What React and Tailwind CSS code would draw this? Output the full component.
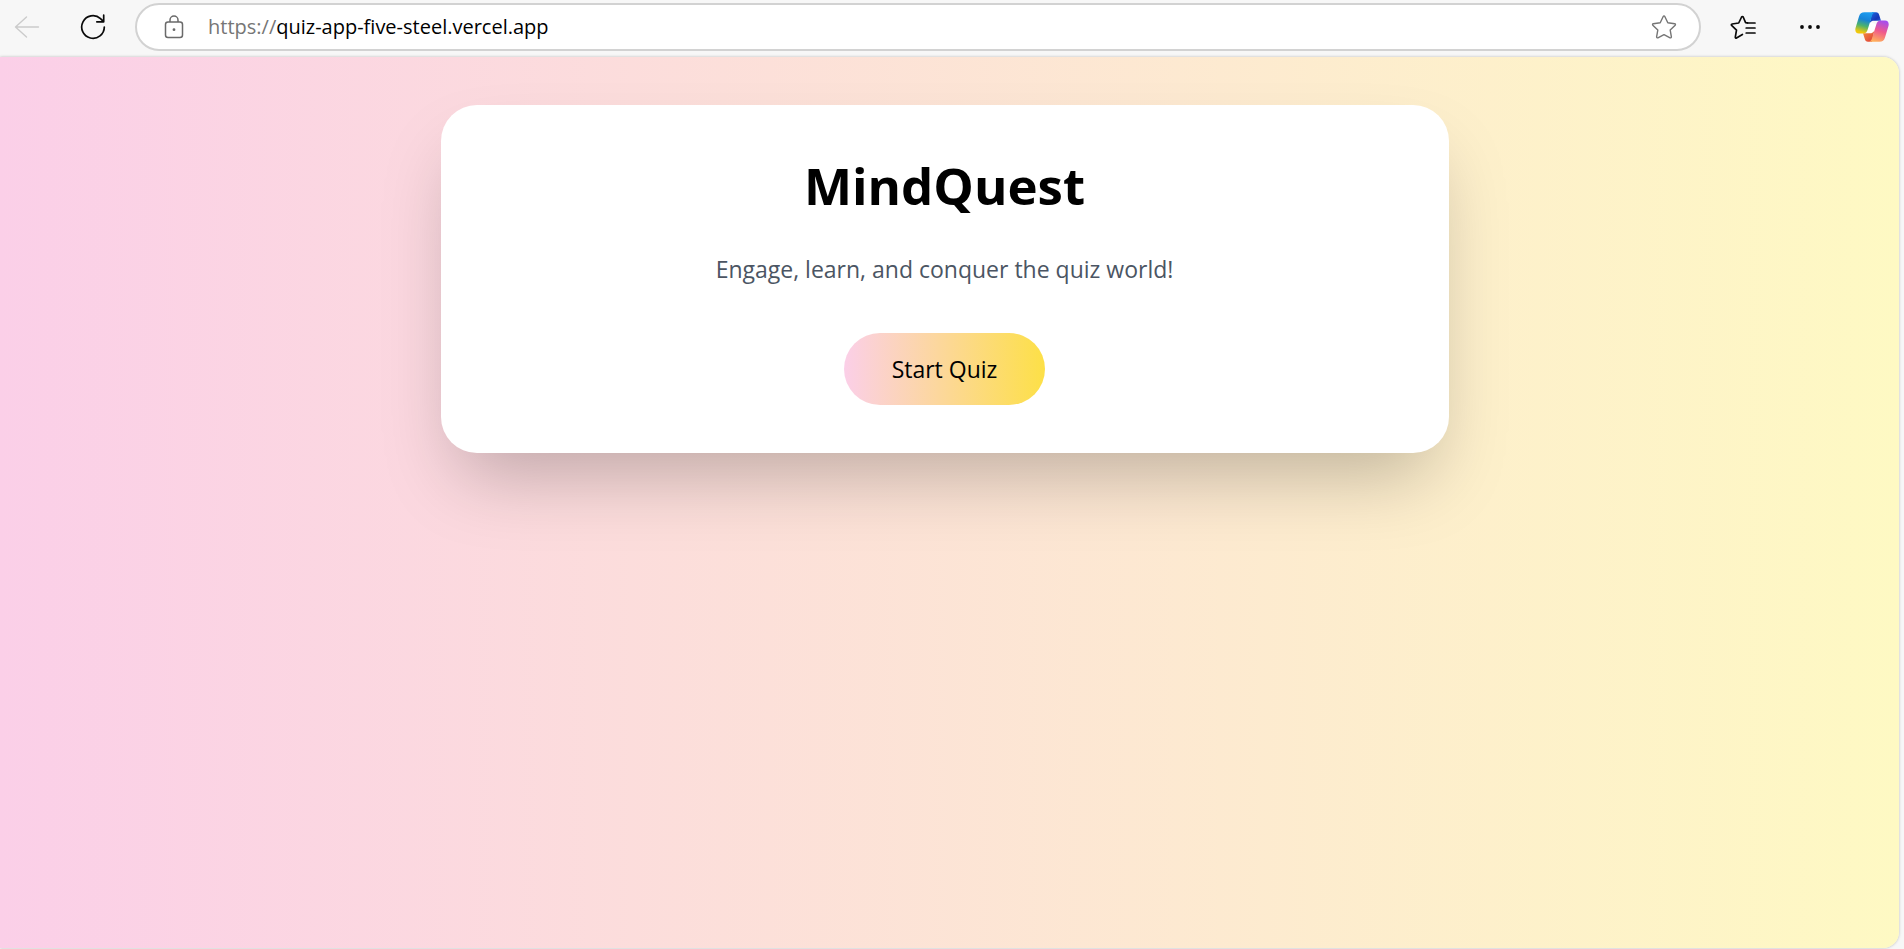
function BackIcon() {
  return (
    <svg width="26" height="24" viewBox="0 0 26 24" fill="none" stroke="#cbcbcb" strokeWidth="1.4" strokeLinecap="round" strokeLinejoin="round" aria-hidden="true">
      <path d="M24.5 12H1.5M12.5 2 1.5 12 12.5 22" />
    </svg>
  );
}

function ReloadIcon() {
  return (
    <svg width="26" height="26" viewBox="0 0 26 26" fill="none" stroke="#0a0a0a" strokeWidth="1.7" strokeLinecap="round" strokeLinejoin="round" aria-hidden="true">
      <path d="M24.3 13A11.3 11.3 0 1 1 20.5 4.6L23.5 7.6M23.7 1.2V7.8H16.8" />
    </svg>
  );
}

function LockIcon() {
  return (
    <svg width="20" height="24" viewBox="0 0 20 24" fill="none" stroke="#6a6a6a" strokeWidth="1.5" aria-hidden="true">
      <rect x="1.5" y="7" width="17" height="15.5" rx="2.5" />
      <path d="M6 7V5a4 4 0 0 1 8 0v2" />
      <circle cx="10" cy="14.7" r="1.4" fill="#6a6a6a" stroke="none" />
    </svg>
  );
}

function StarIcon() {
  return (
    <svg width="26" height="26" viewBox="0 0 26 26" fill="none" stroke="#757575" strokeWidth="1.4" strokeLinejoin="round" aria-hidden="true">
      <path d="M12.2 2.5a.9.9 0 0 1 1.6 0l3 6.2 6.9 1a.9.9 0 0 1 .5 1.5l-5 4.9 1.2 6.8a.9.9 0 0 1-1.3.9L13 20.6l-6.1 3.2a.9.9 0 0 1-1.3-.9l1.2-6.8-5-4.9a.9.9 0 0 1 .5-1.5l6.9-1z" />
    </svg>
  );
}

function FavoritesIcon() {
  return (
    <svg width="26" height="26" viewBox="0 0 26 26" fill="none" stroke="#0a0a0a" strokeWidth="1.7" strokeLinecap="round" strokeLinejoin="round" aria-hidden="true">
      <path d="M17.5 8.8 15.6 8.6 13.2 3a.9.9 0 0 0-1.6 0L8.7 9 2.1 10a.8.8 0 0 0-.5 1.4l4.9 4.7-1.2 7.1a.8.8 0 0 0 1.2.8l5.9-3.5" />
      <path d="M17.5 9H25M16.2 14H25M16.2 19H25" />
    </svg>
  );
}

function MoreIcon() {
  return (
    <svg width="20" height="4" viewBox="0 0 20 4" fill="#0a0a0a" aria-hidden="true">
      <circle cx="2" cy="2" r="1.9" />
      <circle cx="10" cy="2" r="1.9" />
      <circle cx="18" cy="2" r="1.9" />
    </svg>
  );
}

function CopilotIcon() {
  return (
    <svg width="34" height="30" viewBox="0 0 34 30" aria-hidden="true">
      <defs>
        <linearGradient id="cp-left" x1="0.6" y1="0" x2="0.35" y2="1">
          <stop offset="0" stopColor="#1c9df0" />
          <stop offset="0.35" stopColor="#1683d8" />
          <stop offset="0.65" stopColor="#4db36b" />
          <stop offset="0.95" stopColor="#f0c80c" />
        </linearGradient>
        <linearGradient id="cp-right" x1="0.7" y1="0" x2="0.4" y2="1">
          <stop offset="0" stopColor="#a44df0" />
          <stop offset="0.5" stopColor="#f0598c" />
          <stop offset="1" stopColor="#ffae5c" />
        </linearGradient>
        <linearGradient id="cp-top" x1="0" y1="0" x2="1" y2="1">
          <stop offset="0" stopColor="#1b6fe0" />
          <stop offset="0.6" stopColor="#1736b8" />
          <stop offset="1" stopColor="#2a6fe0" />
        </linearGradient>
        <linearGradient id="cp-bottom" x1="0" y1="0" x2="1" y2="1">
          <stop offset="0" stopColor="#f6913a" />
          <stop offset="1" stopColor="#dc3a3c" />
        </linearGradient>
      </defs>
      <path d="M12 8 21 12.5 24 18 13 22 10 18z" fill="#ffffff" />
      <path d="M17 .3h4c1.8 0 2.7 1 3.2 2.7L26 8.7H19c-1.8 0-3 .6-4.3 2.5z" fill="url(#cp-top)" />
      <path d="M17 29.7h-4c-1.8 0-2.7-1-3.2-2.7L8 21.3h7c1.8 0 3-.6 4.3-2.5z" fill="url(#cp-bottom)" />
      <path d="M9.5.3H20c-1.8.5-2.6 2-3.2 4L12.7 17.5c-.8 2.6-2 4-4.5 4H4C.8 21.5-.3 19 .6 15.8L4 4.5C4.9 1.5 6.5.3 9.5.3z" fill="url(#cp-left)" />
      <path d="M24.5 29.7H14c1.8-.5 2.6-2 3.2-4L21.3 12.5c.8-2.6 2-4 4.5-4H30c3.2 0 4.3 2.5 3.4 5.7L30 25.5c-.9 3-2.5 4.2-5.5 4.2z" fill="url(#cp-right)" />
    </svg>
  );
}

function BrowserBar() {
  return (
    <header className="flex h-[57px] shrink-0 items-center pr-[15px] pb-[3px] pl-3.5">
      <button type="button" aria-label="Back" disabled className="shrink-0">
        <BackIcon />
      </button>
      <button type="button" aria-label="Reload" className="ml-10 shrink-0">
        <ReloadIcon />
      </button>
      <div className="ml-[29px] flex h-12 min-w-0 flex-1 items-center rounded-full border-2 border-[#d2d2d2] bg-white pr-[22px] pl-[27px]">
        <LockIcon />
        <div className="relative ml-6 min-w-0 flex-1 text-xl leading-7">
          <div aria-hidden="true" className="pointer-events-none whitespace-nowrap">
            <span className="text-[#767676]">https://</span>
            <span className="text-black">quiz-app-five-steel.vercel.app</span>
          </div>
          <input
            aria-label="Address"
            readOnly
            value="https://quiz-app-five-steel.vercel.app"
            className="absolute inset-0 w-full bg-transparent text-transparent outline-none"
          />
        </div>
        <button type="button" aria-label="Add to favorites" className="shrink-0">
          <StarIcon />
        </button>
      </div>
      <button type="button" aria-label="Favorites" className="ml-[29px] shrink-0">
        <FavoritesIcon />
      </button>
      <button type="button" aria-label="Settings and more" className="ml-11 flex h-6 shrink-0 items-center">
        <MoreIcon />
      </button>
      <button type="button" aria-label="Copilot" className="ml-[35px] shrink-0">
        <CopilotIcon />
      </button>
    </header>
  );
}

export default function App() {
  return (
    <div className="flex min-h-screen flex-col bg-[#f7f7f7] font-['Open_Sans','Noto_Sans',sans-serif]">
      <BrowserBar />
      <div className="flex flex-1 flex-col pr-[5px] pb-px">
        <main className="flex-1 rounded-r-2xl bg-linear-to-r/srgb from-[#fbcfe8] to-[#fef9c3] pt-12 pr-2.5 shadow-[0_0_3px_rgba(0,0,0,0.25)]">
          <section className="mx-auto flex max-w-[1008px] flex-col items-center rounded-[36px] bg-white p-12 text-center shadow-[0_38px_75px_-18px_rgba(0,0,0,0.25)]">
            <h1 className="text-[51px] leading-[64px] font-bold text-black">MindQuest</h1>
            <p className="mt-[34px] text-[23px] leading-9 text-[#4b5563]">Engage, learn, and conquer the quiz world!</p>
            <button
              type="button"
              className="mt-[46px] h-[72px] rounded-full bg-linear-to-r/srgb from-[#fbcfe8] to-[#fde047] px-12 text-[23px] leading-9 text-black"
            >
              Start Quiz
            </button>
          </section>
        </main>
      </div>
    </div>
  );
}
